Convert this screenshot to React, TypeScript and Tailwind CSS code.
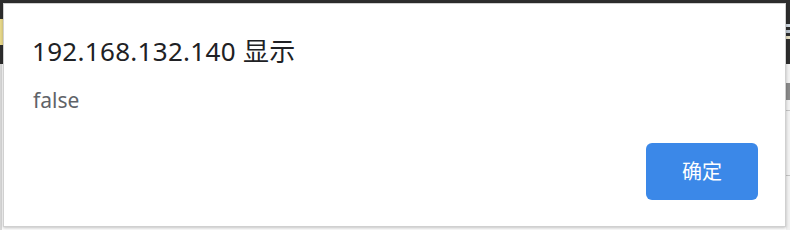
export default function App() {
  return (
    <div
      className="relative w-[790px] h-[230px] overflow-hidden bg-[#f1f1f1]"
      style={{ fontFamily: '"Noto Sans", "Noto Sans CJK SC", sans-serif' }}
    >
      {/* page behind the dialog */}
      <div className="flex h-[64px] bg-[#2d2d2d]">
        <div className="mt-[19px] h-[26px] w-[3px] bg-[#e8d98a]" />
        <div className="flex-1" />
        <div className="mt-[24px] flex w-[4px] flex-col gap-[3px]">
          <div className="h-[3px] bg-[#cfd8e0]" />
          <div className="h-[3px] bg-[#b8c2cc]" />
          <div className="h-[3px] bg-[#e3dcc0]" />
        </div>
      </div>
      <div className="flex h-[166px]">
        <div className="w-[2px] bg-[#d8d8d8]" />
        <div className="flex-1 bg-white" />
        <div className="flex w-[4px] flex-col">
          <div className="mt-[19px] h-[17px] bg-[#8a8a8a]" />
          <div className="mt-[10px] h-[1px] bg-[#c4c4c4]" />
          <div className="mt-[64px] h-[1px] bg-[#c4c4c4]" />
        </div>
      </div>

      {/* alert dialog */}
      <div className="absolute left-[3px] top-[3px] flex h-[224px] w-[783px] flex-col border border-[#d0d0d0] bg-white pl-[28px] pr-[27px] pt-[32px] pb-[26px] shadow-[0_1px_3px_rgba(0,0,0,0.25)]">
        <div className="text-[26px] leading-[31px] tracking-[0.3px] text-[#202124]">192.168.132.140 显示</div>
        <div className="mt-[19px] pl-[1px] text-[21px] leading-[28px] text-[#5f6368]">false</div>
        <div className="mt-auto flex justify-end">
          <button className="h-[57px] w-[112px] rounded-[6px] bg-[#3b88e8] text-[20px] text-white">
            确定
          </button>
        </div>
      </div>
    </div>
  );
}
